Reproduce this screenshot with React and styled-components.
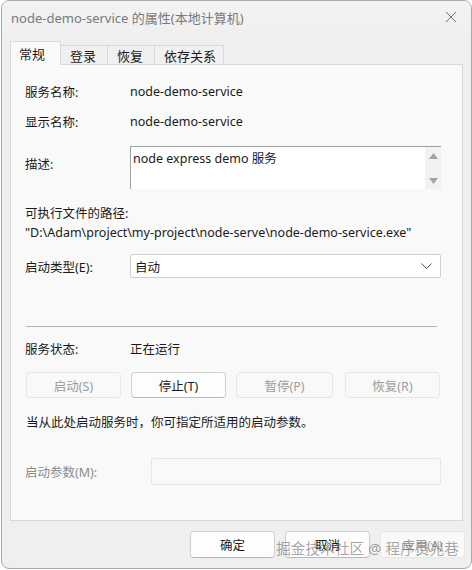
import React from 'react';
import styled, { createGlobalStyle } from 'styled-components';

const Global = createGlobalStyle`
  html, body { margin: 0; padding: 0; background: #ffffff; }
  body {
    font-family: "Noto Sans", "Noto Sans CJK SC", sans-serif;
    font-size: 12.5px;
    color: #1a1a1a;
  }
`;

const Window = styled.div`
  box-sizing: border-box;
  width: 471px;
  height: 569px;
  margin: 0 0 0 1px;
  border: 1px solid #a9a9a9;
  border-radius: 8px;
  background: #efefef;
  display: flex;
  flex-direction: column;
  overflow: hidden;
`;

const TitleBar = styled.div`
  height: 38px;
  flex: none;
  display: flex;
  align-items: center;
  justify-content: space-between;
  padding: 0 10px 6px 9px;
  box-sizing: border-box;
  background: linear-gradient(#f4f3f4, #efefef);
  color: #7a7a7a;
  font-size: 13px;
`;

const Close = styled.svg`
  width: 12px;
  height: 12px;
  margin-right: 4px;
`;

const Tabs = styled.div`
  display: flex;
  align-items: flex-end;
  padding: 0 0 0 8px;
  height: 25px;
  flex: none;
`;

const Tab = styled.div`
  box-sizing: border-box;
  height: ${p => (p.$active ? '24px' : '19px')};
  width: ${p => p.$w}px;
  padding-left: ${p => (p.$active ? '8px' : '9px')};
  display: flex;
  align-items: center;
  border: 1px solid #d9d9d9;
  border-bottom: none;
  border-left: ${p => (p.$first ? '1px solid #d9d9d9' : 'none')};
  background: ${p => (p.$active ? '#f9f9f9' : '#f0f0f0')};
  margin-bottom: ${p => (p.$active ? '-1px' : '0')};
  position: relative;
  z-index: ${p => (p.$active ? 2 : 1)};
  font-size: 13px;
  color: #1a1a1a;
`;

const Panel = styled.div`
  box-sizing: border-box;
  margin: 0 8px;
  width: 453px;
  height: 457px;
  flex: none;
  background: #f9f9f9;
  border: 1px solid #d9d9d9;
  padding: 16px 21px 0 14px;
  display: flex;
  flex-direction: column;
`;

const Row = styled.div`
  display: flex;
  align-items: ${p => p.$align || 'center'};
  height: ${p => p.$h}px;
  margin-top: ${p => p.$mt || 0}px;
`;

const Label = styled.div`
  width: ${p => p.$w || 105}px;
  flex: none;
  color: ${p => (p.$dim ? '#8c8c8c' : '#1a1a1a')};
  padding-top: ${p => p.$pt || 0}px;
`;

const Value = styled.div`
  color: #1a1a1a;
`;

const TextArea = styled.div`
  box-sizing: border-box;
  flex: 1;
  height: 43px;
  background: #ffffff;
  border-top: 1px solid #a0a0a0;
  border-left: 1px solid #a0a0a0;
  display: flex;
  justify-content: space-between;
`;

const AreaText = styled.div`
  padding: 1px 0 0 2px;
`;

const ScrollBar = styled.div`
  width: 16px;
  background: #f2f2f2;
  display: flex;
  flex-direction: column;
  justify-content: space-between;
  align-items: center;
  padding: 6px 0 5px;
  box-sizing: border-box;
`;

const Path = styled.div`
  margin-top: 2px;
  height: 18px;
`;

const Select = styled.div`
  box-sizing: border-box;
  flex: 1;
  height: 24px;
  background: #ffffff;
  border: 1px solid #cfcfcf;
  border-radius: 2px;
  display: flex;
  align-items: center;
  justify-content: space-between;
  padding: 0 8px 0 4px;
`;

const Separator = styled.div`
  height: 1px;
  background: #b4b4b4;
  margin: 48px 4px 0 1px;
`;

const ButtonRow = styled.div`
  display: flex;
  margin-top: 14px;
  padding-left: 1px;
`;

const Button = styled.div`
  box-sizing: border-box;
  width: ${p => p.$w || 95}px;
  height: ${p => p.$h || 26}px;
  margin-left: ${p => p.$ml || 0}px;
  border: 1px solid ${p => (p.$disabled ? '#e6e6e6' : '#d0d0d0')};
  border-bottom-color: ${p => (p.$disabled ? '#e6e6e6' : '#b8b8b8')};
  border-radius: 4px;
  background: ${p => (p.$disabled ? '#f9f9f9' : '#fdfdfd')};
  color: ${p => (p.$disabled ? '#9d9d9d' : '#1a1a1a')};
  display: flex;
  align-items: center;
  justify-content: center;
`;

const Note = styled.div`
  margin-top: 14px;
  padding-left: 1px;
`;

const Input = styled.div`
  box-sizing: border-box;
  flex: 1;
  height: 27px;
  border: 1px solid #e6e6e6;
  border-radius: 2px;
  background: #f9f9f9;
`;

const Footer = styled.div`
  display: flex;
  justify-content: flex-end;
  gap: 10px;
  padding: 10px 6px 0 0;
  position: relative;
`;

const Watermark = styled.div`
  position: absolute;
  right: 12px;
  top: 16px;
  font-size: 14.5px;
  color: rgba(90, 90, 90, 0.55);
  letter-spacing: 0.2px;
  pointer-events: none;
`;

const Arrow = ({ up }) => (
  <svg width="9" height="6" viewBox="0 0 9 6">
    <path d={up ? 'M0 6 L4.5 0 L9 6 Z' : 'M0 0 L4.5 6 L9 0 Z'} fill="#a3a3a3" />
  </svg>
);

export default function App() {
  return (
    <>
      <Global />
      <Window>
        <TitleBar>
          <span>node-demo-service 的属性(本地计算机)</span>
          <Close viewBox="0 0 12 12">
            <path d="M1 1 L11 11 M11 1 L1 11" stroke="#707070" strokeWidth="1" fill="none" />
          </Close>
        </TitleBar>
        <Tabs>
          <Tab $active $first $w={51}>常规</Tab>
          <Tab $w={47}>登录</Tab>
          <Tab $w={47}>恢复</Tab>
          <Tab $w={69}>依存关系</Tab>
        </Tabs>
        <Panel>
          <Row $h={20}>
            <Label>服务名称:</Label>
            <Value>node-demo-service</Value>
          </Row>
          <Row $h={20} $mt={10}>
            <Label>显示名称:</Label>
            <Value>node-demo-service</Value>
          </Row>
          <Row $h={43} $mt={15} $align="flex-start">
            <Label $pt={8}>描述:</Label>
            <TextArea>
              <AreaText>node express demo 服务</AreaText>
              <ScrollBar>
                <Arrow up />
                <Arrow />
              </ScrollBar>
            </TextArea>
          </Row>
          <Row $h={20} $mt={13}>
            <Label $w={200}>可执行文件的路径:</Label>
          </Row>
          <Path>"D:\Adam\project\my-project\node-serve\node-demo-service.exe"</Path>
          <Row $h={24} $mt={12}>
            <Label>启动类型(E):</Label>
            <Select>
              <span>自动</span>
              <svg width="11" height="6" viewBox="0 0 11 6">
                <path d="M0.5 0.5 L5.5 5.5 L10.5 0.5" stroke="#555" strokeWidth="1" fill="none" />
              </svg>
            </Select>
          </Row>
          <Separator />
          <Row $h={20} $mt={11}>
            <Label>服务状态:</Label>
            <Value>正在运行</Value>
          </Row>
          <ButtonRow>
            <Button $disabled>启动(S)</Button>
            <Button $ml={10}>停止(T)</Button>
            <Button $disabled $ml={10} $w={97}>暂停(P)</Button>
            <Button $disabled $ml={12}>恢复(R)</Button>
          </ButtonRow>
          <Note>当从此处启动服务时，你可指定所适用的启动参数。</Note>
          <Row $h={27} $mt={27}>
            <Label $dim $w={126}>启动参数(M):</Label>
            <Input />
          </Row>
        </Panel>
        <Footer>
          <Button $w={85} $h={27}>确定</Button>
          <Button $w={85} $h={27}>取消</Button>
          <Button $w={85} $h={27} $disabled>应用(A)</Button>
          <Watermark>掘金技术社区 @ 程序员兆巷</Watermark>
        </Footer>
      </Window>
    </>
  );
}
